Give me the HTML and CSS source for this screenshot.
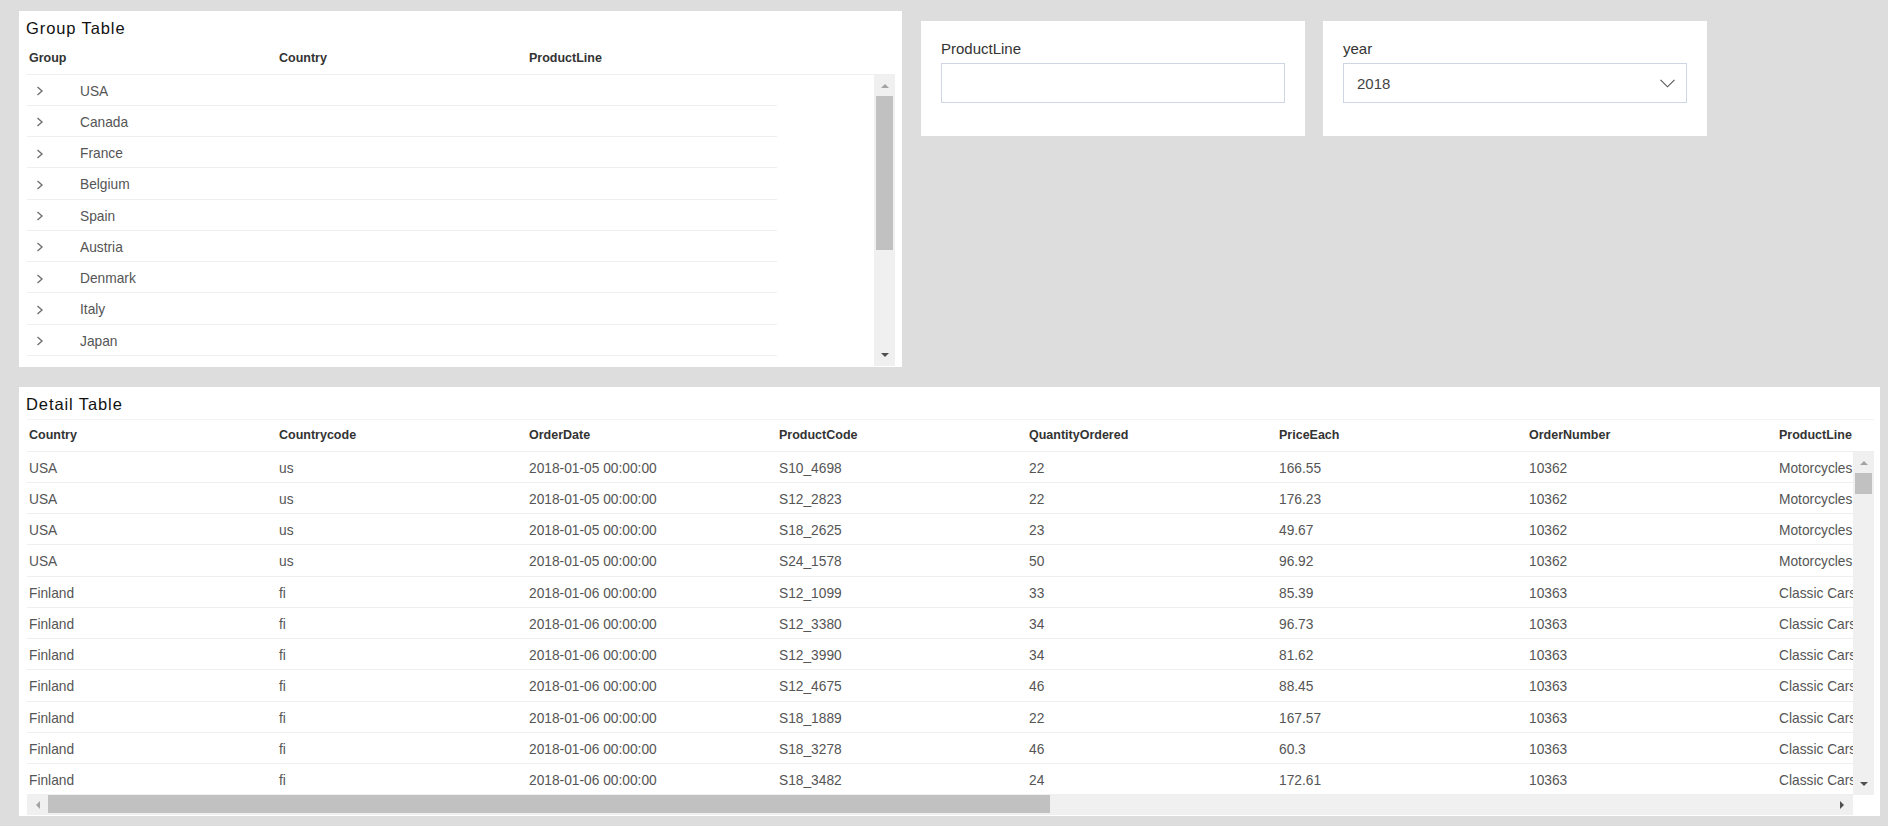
FILE: index.html
```html
<!DOCTYPE html>
<html lang="en">
<head>
<meta charset="utf-8">
<title>Dashboard</title>
<link rel="stylesheet" href="styles.css">
</head>
<body>
<div class="page">
  <div class="top">
    <section class="panel group-panel">
      <h2 class="panel-title">Group Table</h2>
      <div class="thead">
        <div class="th">Group</div>
        <div class="th">Country</div>
        <div class="th">ProductLine</div>
      </div>
      <div class="body-wrap group-body">
        <div class="body-clip">
          <div class="rows group-rows">
            <div class="tr"><div class="td gcell"><svg class="chev" width="8" height="10" viewBox="0 0 8 10"><polyline points="1.5,1 6,5 1.5,9" /></svg><span>USA</span></div><div class="td"></div><div class="td"></div></div>
            <div class="tr"><div class="td gcell"><svg class="chev" width="8" height="10" viewBox="0 0 8 10"><polyline points="1.5,1 6,5 1.5,9" /></svg><span>Canada</span></div><div class="td"></div><div class="td"></div></div>
            <div class="tr"><div class="td gcell"><svg class="chev" width="8" height="10" viewBox="0 0 8 10"><polyline points="1.5,1 6,5 1.5,9" /></svg><span>France</span></div><div class="td"></div><div class="td"></div></div>
            <div class="tr"><div class="td gcell"><svg class="chev" width="8" height="10" viewBox="0 0 8 10"><polyline points="1.5,1 6,5 1.5,9" /></svg><span>Belgium</span></div><div class="td"></div><div class="td"></div></div>
            <div class="tr"><div class="td gcell"><svg class="chev" width="8" height="10" viewBox="0 0 8 10"><polyline points="1.5,1 6,5 1.5,9" /></svg><span>Spain</span></div><div class="td"></div><div class="td"></div></div>
            <div class="tr"><div class="td gcell"><svg class="chev" width="8" height="10" viewBox="0 0 8 10"><polyline points="1.5,1 6,5 1.5,9" /></svg><span>Austria</span></div><div class="td"></div><div class="td"></div></div>
            <div class="tr"><div class="td gcell"><svg class="chev" width="8" height="10" viewBox="0 0 8 10"><polyline points="1.5,1 6,5 1.5,9" /></svg><span>Denmark</span></div><div class="td"></div><div class="td"></div></div>
            <div class="tr"><div class="td gcell"><svg class="chev" width="8" height="10" viewBox="0 0 8 10"><polyline points="1.5,1 6,5 1.5,9" /></svg><span>Italy</span></div><div class="td"></div><div class="td"></div></div>
            <div class="tr"><div class="td gcell"><svg class="chev" width="8" height="10" viewBox="0 0 8 10"><polyline points="1.5,1 6,5 1.5,9" /></svg><span>Japan</span></div><div class="td"></div><div class="td"></div></div>
          </div>
        </div>
        <div class="vscroll">
          <div class="sb-btn"><svg width="8" height="5" viewBox="0 0 8 5"><polygon class="arrow-off" points="0,5 4,1 8,5"/></svg></div>
          <div class="sb-track">
            <div class="thumb-v group-thumb"></div>
          </div>
          <div class="sb-btn"><svg width="8" height="5" viewBox="0 0 8 5"><polygon class="arrow-on" points="0,0 8,0 4,4"/></svg></div>
        </div>
      </div>
    </section>

    <section class="panel filter">
      <div class="filter-label">ProductLine</div>
      <div class="field"></div>
    </section>

    <section class="panel filter">
      <div class="filter-label">year</div>
      <div class="field select">
        <span class="select-value">2018</span>
        <svg class="select-chev" width="15" height="9" viewBox="0 0 15 9"><polyline points="0.5,0.8 7.5,7.8 14.5,0.8"/></svg>
      </div>
    </section>
  </div>

  <section class="panel detail-panel">
    <h2 class="panel-title">Detail Table</h2>
    <div class="thead detail-head">
      <div class="th">Country</div>
      <div class="th">Countrycode</div>
      <div class="th">OrderDate</div>
      <div class="th">ProductCode</div>
      <div class="th">QuantityOrdered</div>
      <div class="th">PriceEach</div>
      <div class="th">OrderNumber</div>
      <div class="th th-last">ProductLine</div>
    </div>
    <div class="body-wrap detail-body">
      <div class="body-clip">
        <div class="rows detail-rows">
          <div class="tr"><div class="td">USA</div><div class="td">us</div><div class="td">2018-01-05 00:00:00</div><div class="td">S10_4698</div><div class="td">22</div><div class="td">166.55</div><div class="td">10362</div><div class="td td-last">Motorcycles</div></div>
          <div class="tr"><div class="td">USA</div><div class="td">us</div><div class="td">2018-01-05 00:00:00</div><div class="td">S12_2823</div><div class="td">22</div><div class="td">176.23</div><div class="td">10362</div><div class="td td-last">Motorcycles</div></div>
          <div class="tr"><div class="td">USA</div><div class="td">us</div><div class="td">2018-01-05 00:00:00</div><div class="td">S18_2625</div><div class="td">23</div><div class="td">49.67</div><div class="td">10362</div><div class="td td-last">Motorcycles</div></div>
          <div class="tr"><div class="td">USA</div><div class="td">us</div><div class="td">2018-01-05 00:00:00</div><div class="td">S24_1578</div><div class="td">50</div><div class="td">96.92</div><div class="td">10362</div><div class="td td-last">Motorcycles</div></div>
          <div class="tr"><div class="td">Finland</div><div class="td">fi</div><div class="td">2018-01-06 00:00:00</div><div class="td">S12_1099</div><div class="td">33</div><div class="td">85.39</div><div class="td">10363</div><div class="td td-last">Classic Cars</div></div>
          <div class="tr"><div class="td">Finland</div><div class="td">fi</div><div class="td">2018-01-06 00:00:00</div><div class="td">S12_3380</div><div class="td">34</div><div class="td">96.73</div><div class="td">10363</div><div class="td td-last">Classic Cars</div></div>
          <div class="tr"><div class="td">Finland</div><div class="td">fi</div><div class="td">2018-01-06 00:00:00</div><div class="td">S12_3990</div><div class="td">34</div><div class="td">81.62</div><div class="td">10363</div><div class="td td-last">Classic Cars</div></div>
          <div class="tr"><div class="td">Finland</div><div class="td">fi</div><div class="td">2018-01-06 00:00:00</div><div class="td">S12_4675</div><div class="td">46</div><div class="td">88.45</div><div class="td">10363</div><div class="td td-last">Classic Cars</div></div>
          <div class="tr"><div class="td">Finland</div><div class="td">fi</div><div class="td">2018-01-06 00:00:00</div><div class="td">S18_1889</div><div class="td">22</div><div class="td">167.57</div><div class="td">10363</div><div class="td td-last">Classic Cars</div></div>
          <div class="tr"><div class="td">Finland</div><div class="td">fi</div><div class="td">2018-01-06 00:00:00</div><div class="td">S18_3278</div><div class="td">46</div><div class="td">60.3</div><div class="td">10363</div><div class="td td-last">Classic Cars</div></div>
          <div class="tr"><div class="td">Finland</div><div class="td">fi</div><div class="td">2018-01-06 00:00:00</div><div class="td">S18_3482</div><div class="td">24</div><div class="td">172.61</div><div class="td">10363</div><div class="td td-last">Classic Cars</div></div>
        </div>
      </div>
      <div class="vscroll">
        <div class="sb-btn"><svg width="8" height="5" viewBox="0 0 8 5"><polygon class="arrow-off" points="0,5 4,1 8,5"/></svg></div>
        <div class="sb-track">
          <div class="thumb-v detail-thumb"></div>
        </div>
        <div class="sb-btn"><svg width="8" height="5" viewBox="0 0 8 5"><polygon class="arrow-on" points="0,0 8,0 4,4"/></svg></div>
      </div>
    </div>
    <div class="hscroll-row">
      <div class="hscroll">
        <div class="sb-btn-h"><svg width="5" height="8" viewBox="0 0 5 8"><polygon class="arrow-off" points="5,0 5,8 1,4"/></svg></div>
        <div class="sb-track-h">
          <div class="thumb-h"></div>
        </div>
        <div class="sb-btn-h"><svg width="5" height="8" viewBox="0 0 5 8"><polygon class="arrow-on" points="0,0 4,4 0,8"/></svg></div>
      </div>
      <div class="corner"></div>
    </div>
  </section>
</div>
</body>
</html>
```
FILE: styles.css
```css
* {
  box-sizing: border-box;
}

html, body {
  margin: 0;
  padding: 0;
}

body {
  background: #dddddd;
  font-family: "Liberation Sans", Arial, sans-serif;
  color: #555555;
}

.page {
  padding: 11px 0 0 19px;
}

.top {
  display: flex;
  align-items: flex-start;
}

.panel {
  background: #ffffff;
}

.group-panel {
  width: 883px;
  padding: 0 7px 1px 8px;
}

.panel-title {
  margin: 0 0 0 -1px;
  height: 32px;
  padding-top: 2px;
  line-height: 30px;
  font-size: 16.5px;
  font-weight: normal;
  letter-spacing: 0.9px;
  color: #111111;
}

.thead {
  display: flex;
  height: 31.5px;
  border-bottom: 1px solid #efefef;
  overflow: hidden;
}

.detail-head {
  height: 32.5px;
  border-top: 1px solid #f3f3f3;
}

.th {
  flex: 0 0 250px;
  padding-left: 2px;
  font-size: 12.5px;
  font-weight: bold;
  line-height: 30.5px;
  color: #333333;
  white-space: nowrap;
}

.th-last {
  flex: 0 0 auto;
}

.body-wrap {
  display: flex;
}

.group-body {
  height: 291.5px;
}

.detail-body {
  height: 343.25px;
}

.body-clip {
  flex: 1 1 auto;
  overflow: hidden;
}

.rows {
  width: 750px;
}

.detail-rows {
  width: 100%;
}

.tr {
  display: flex;
  height: 31.25px;
  border-bottom: 1px solid #efefef;
}

.td {
  flex: 0 0 250px;
  padding: 3px 0 0 2px;
  font-size: 13.75px;
  line-height: 27.25px;
  color: #555555;
  white-space: nowrap;
}

.td-last {
  flex: 1 1 auto;
  overflow: hidden;
}

.gcell {
  display: flex;
  align-items: center;
  padding-left: 9px;
}

.chev {
  flex: 0 0 auto;
  margin-right: 36px;
}

.chev polyline {
  fill: none;
  stroke: #707070;
  stroke-width: 1.4;
}

/* vertical scrollbar */
.vscroll {
  flex: 0 0 21px;
  display: flex;
  flex-direction: column;
  background: #f0f0f0;
}

.sb-btn {
  flex: 0 0 21px;
  display: flex;
  align-items: center;
  justify-content: center;
}

.sb-track {
  flex: 1 1 auto;
}

.thumb-v {
  margin: 0 2px;
  background: #c1c1c1;
}

.group-thumb {
  height: 154px;
}

.detail-thumb {
  height: 21px;
}

.arrow-off {
  fill: #a3a3a3;
}

.arrow-on {
  fill: #505050;
}

/* filters */
.filter {
  width: 384px;
  height: 115px;
  margin-top: 10px;
  margin-left: 19px;
  padding: 19px 20px 0 20px;
}

.filter + .filter {
  margin-left: 18px;
}

.filter-label {
  height: 18px;
  line-height: 18px;
  font-size: 15px;
  color: #333333;
  margin-bottom: 5px;
}

.field {
  height: 40px;
  border: 1px solid #cfd6e3;
  background: #ffffff;
}

.select {
  display: flex;
  align-items: center;
  justify-content: space-between;
  padding: 0 11px 0 13px;
}

.select-value {
  font-size: 15px;
  color: #444444;
}

.select-chev polyline {
  fill: none;
  stroke: #555555;
  stroke-width: 1.1;
}

/* detail panel */
.detail-panel {
  width: 1861px;
  margin-top: 20px;
  padding: 0 6px 1px 8px;
}

.hscroll-row {
  display: flex;
  height: 20px;
}

.hscroll {
  flex: 1 1 auto;
  display: flex;
  background: #f0f0f0;
}

.sb-btn-h {
  flex: 0 0 21px;
  display: flex;
  align-items: center;
  justify-content: center;
}

.sb-track-h {
  flex: 1 1 auto;
}

.thumb-h {
  width: 1002px;
  height: 18px;
  background: #c1c1c1;
}

.corner {
  flex: 0 0 21px;
  background: #ffffff;
}
```
